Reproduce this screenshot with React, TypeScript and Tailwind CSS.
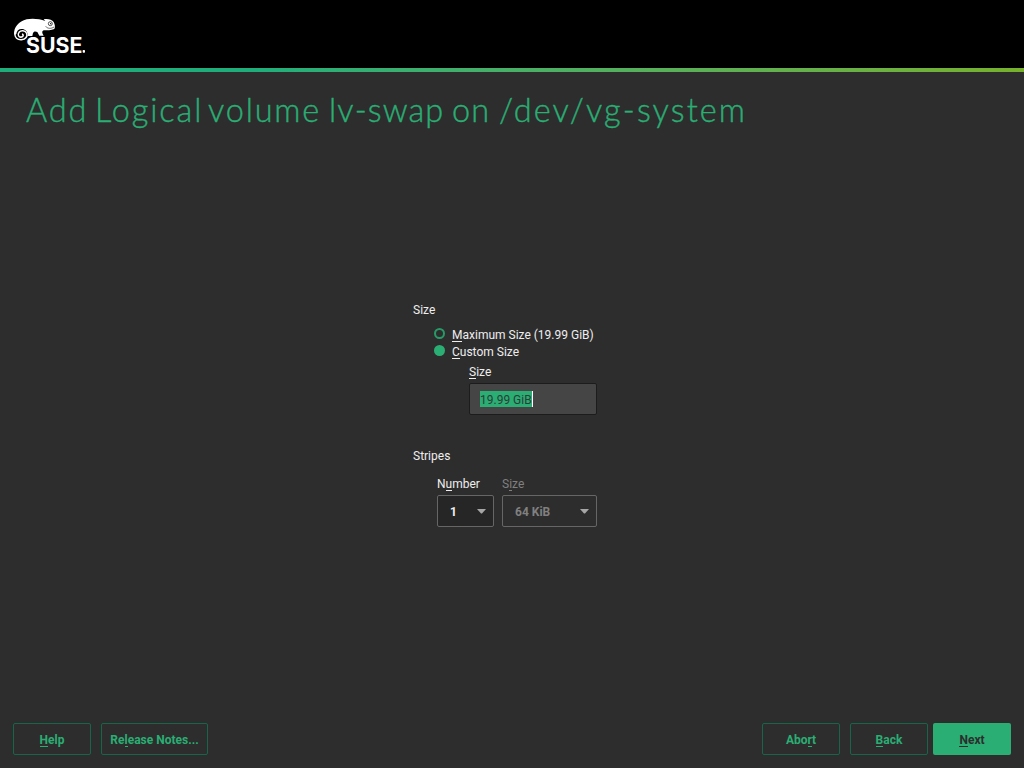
import type { ReactNode } from "react";

function Key({ children }: { children: ReactNode }) {
  return <span className="inline-block h-[14px] border-b border-current leading-[15px]">{children}</span>;
}

function Logo() {
  return (
    <svg className="block h-[70px] w-[100px] shrink-0" viewBox="0 0 300 210" fill="#fff" role="img" aria-label="SUSE">
      <path d="M42 80 C41 58 56 40 80 34 C98 30 119 33 136 39 L131 34 C143 31 156 35 161 42 C165 50 166 57 163 63 C153 68 142 66 131 67 C124 70 127 76 131 83 L118 83 L112 72 C106 69 101 70 99 75 L97 84 L83 84 C84 75 79 67 71 64 C59 61 50 67 49 78 Z" />
      <path d="M45 76 C43 89 53 96 64 95.5 C77 94 84 85 79.5 75 C75 67 63 66 57 73 C51 81 57 89 65 87 C71 85 71 79 66 78" fill="none" stroke="#fff" strokeWidth="4.5" />
      <path d="M137 55 C142 62 153 63 162 57" fill="none" stroke="#000" strokeWidth="1.7" />
      <circle cx="151" cy="47" r="6" fill="#fff" stroke="#000" strokeWidth="2" />
      <circle cx="152" cy="47" r="2" fill="#000" />
      <text x="78" y="134" fontFamily="Inter, sans-serif" fontWeight="700" fontSize="63" textLength="169" lengthAdjust="spacingAndGlyphs">SUSE</text>
      <rect x="248" y="126" width="7" height="8" rx="2" />
    </svg>
  );
}

function Caret() {
  return (
    <svg className="h-[5px] w-[9px]" viewBox="0 0 9 5">
      <path d="M0 0H9L5 4.5H4Z" fill="#a6a6a6" />
    </svg>
  );
}

function Radio({ checked, children }: { checked?: boolean; children: ReactNode }) {
  return (
    <div className="flex h-[17px] items-start">
      <span className={checked ? "mr-[7px] h-[11px] w-[11px] rounded-full bg-[#2aae74]" : "mr-[7px] h-[11px] w-[11px] rounded-full border-2 border-[#279a68]"} />
      <span className="leading-[15px]">{children}</span>
    </div>
  );
}

const outline = "flex h-8 items-center justify-center rounded-[2px] border border-[#17664a] pt-[2px] font-bold text-[#2aae74]";

export default function App() {
  return (
    <div className="flex h-screen w-full flex-col overflow-hidden bg-[#2d2d2d] font-['Roboto',sans-serif] text-[12px] leading-[15px] text-[#eeeeee]">
      <header className="h-[68px] shrink-0 bg-black pt-[8px]"><Logo /></header>
      <div className="z-10 h-1 shrink-0 bg-linear-to-r from-[#1fae7b] from-25% to-[#77b12c]" />
      <h1 className="flex h-[60px] shrink-0 whitespace-nowrap pl-[26px] pt-[18px] font-['Lato',sans-serif] text-[32.5px] font-light leading-[40px] text-[#2aae74] [-webkit-text-stroke:0.4px_#2aae74]">
        <span className="w-[69px] tracking-[1.8px]">Add </span>
        <span className="w-[113px] tracking-[1.9px]">Logical </span>
        <span className="w-[121px] tracking-[1.8px]">volume </span>
        <span className="w-[123px] tracking-[1.1px]">lv-swap </span>
        <span className="w-[47px] tracking-[1px]">on </span>
        <span className="tracking-[2.1px]">/dev/vg-system</span>
      </h1>
      <main className="flex-1 pl-[413px] pt-[171px]">
        <div className="h-[25px]">Size</div>
        <div className="pl-[21px]">
          <Radio><Key>M</Key>aximum Size (19.99 GiB)</Radio>
          <Radio checked><Key>C</Key>ustom Size</Radio>
        </div>
        <div className="mt-[3px] w-[184px] pl-[56px]">
          <div className="h-[18px]"><Key>S</Key>ize</div>
          <div className="flex h-8 items-center rounded-[2px] border border-[#1c1c1c] bg-[#454545] pl-[10px]">
            <span className="h-[16px] border-r border-white bg-[#2aae74] leading-[18px] text-[#2d3d36]">19.99 GiB</span>
          </div>
        </div>
        <div className="mt-[34px] h-[28px]">Stripes</div>
        <div className="flex gap-2 pl-[24px]">
          <div className="w-[57px]">
            <div className="h-[18px]">N<Key>u</Key>mber</div>
            <div className="flex h-8 items-center justify-between rounded-[2px] border border-[#666] bg-[#262626] pl-3 pr-[7.5px] font-bold"><span className="pt-[2px]">1</span><Caret /></div>
          </div>
          <div className="w-[95px] text-[#808080]">
            <div className="h-[18px]">S<Key>i</Key>ze</div>
            <div className="flex h-8 items-center justify-between rounded-[2px] border border-[#666] pl-3 pr-[7.5px] font-bold"><span className="pt-[2px]">64 KiB</span><Caret /></div>
          </div>
        </div>
      </main>
      <footer className="flex h-[45px] shrink-0 pl-[13px] pr-[13px]">
        <button className={`${outline} w-[78px]`}><span><Key>H</Key>elp</span></button>
        <button className={`${outline} ml-[10px] w-[107px]`}><span>Re<Key>l</Key>ease Notes...</span></button>
        <button className={`${outline} ml-auto w-[78px]`}><span>Abo<Key>r</Key>t</span></button>
        <button className={`${outline} ml-[10px] w-[78px]`}><span><Key>B</Key>ack</span></button>
        <button className="ml-[5px] flex h-8 w-[78px] items-center justify-center rounded-[2px] bg-[#2aae74] pt-[2px] font-bold text-[#2d2d2d]"><span><Key>N</Key>ext</span></button>
      </footer>
    </div>
  );
}
